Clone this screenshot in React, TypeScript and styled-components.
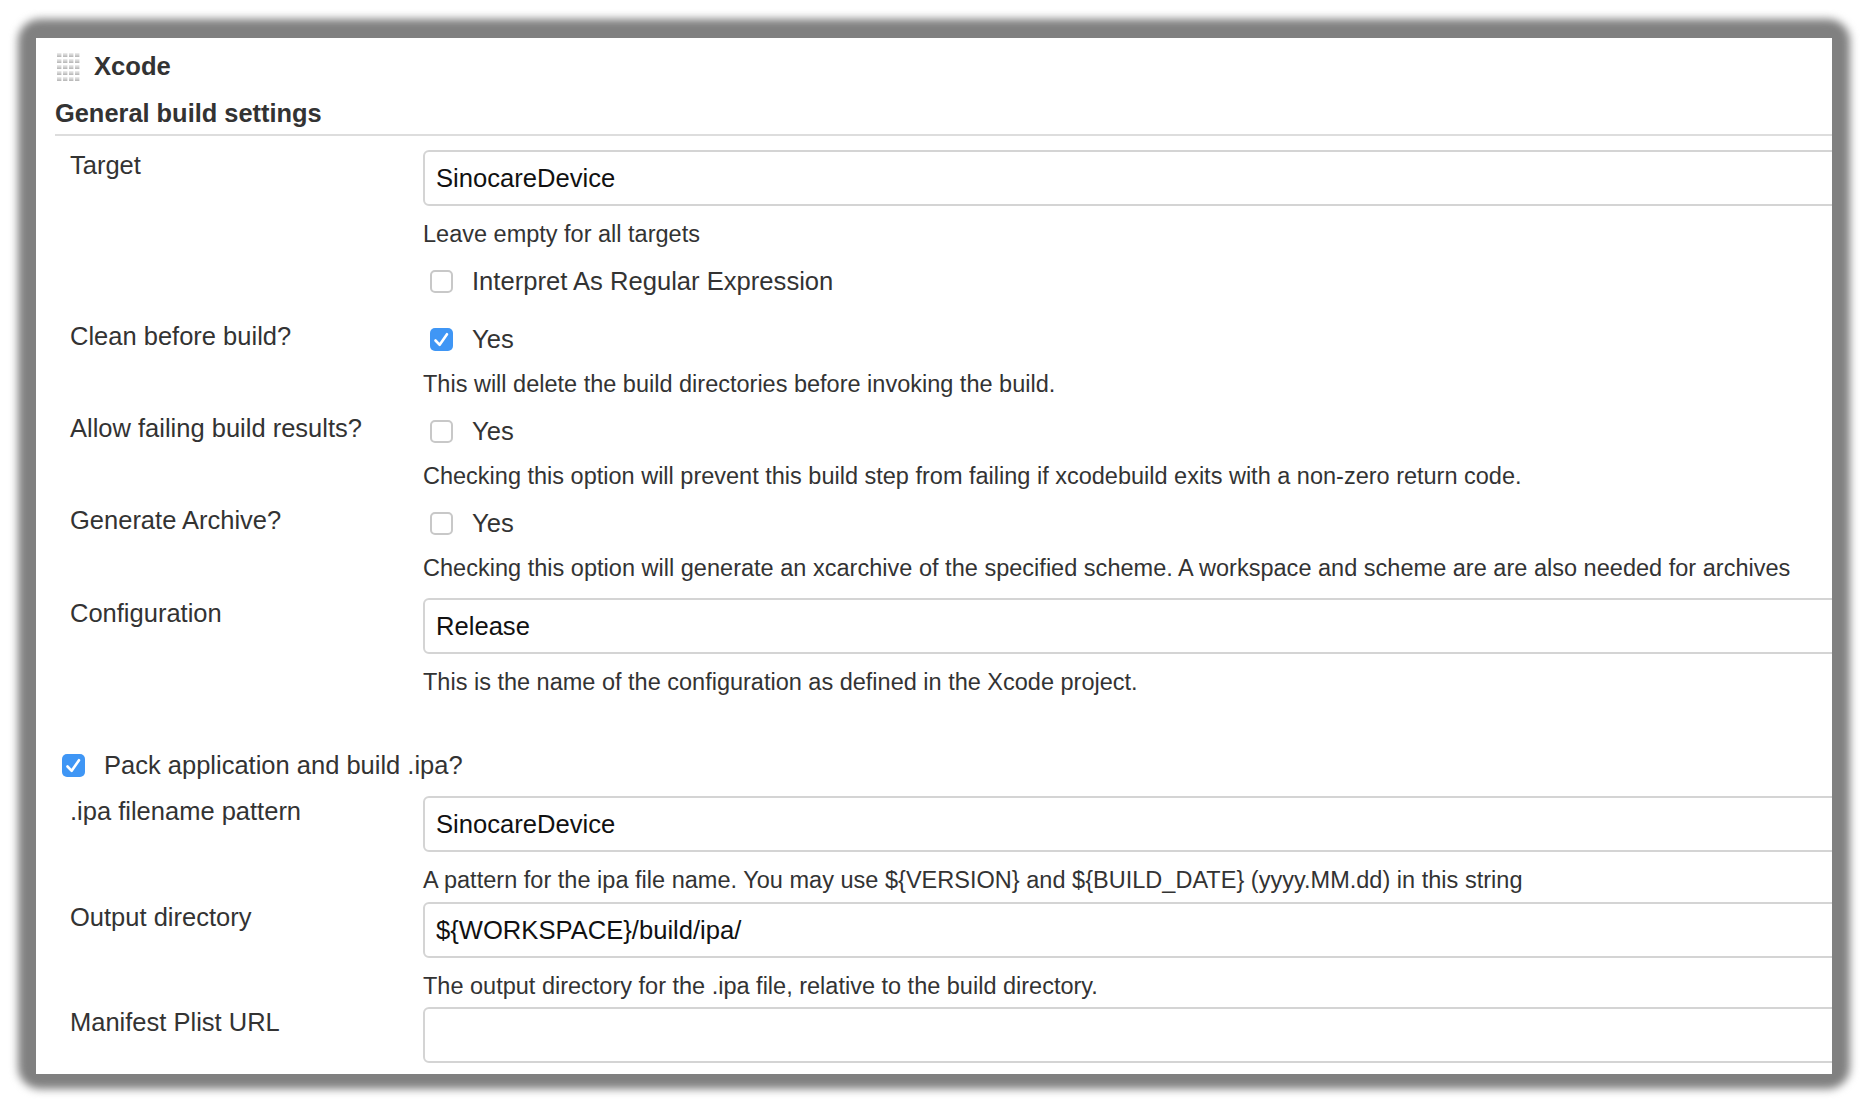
import React from "react";
import styled, { createGlobalStyle } from "styled-components";

const GlobalStyle = createGlobalStyle`
  html, body {
    margin: 0;
    padding: 0;
    background: #fff;
  }
  body {
    font-family: "Liberation Sans", Arial, sans-serif;
    color: #333;
  }
`;

// dotted grip next to the step title
const DragHandle: React.FC = () => {
  const dots = [];
  for (let row = 0; row < 5; row++) {
    for (let col = 0; col < 4; col++) {
      dots.push(<rect key={`${row}-${col}`} x={col * 6} y={row * 6} width="4.4" height="4" fill="url(#grip)" />);
    }
  }
  return (
    <HandleIcon width="23" height="28" viewBox="0 0 23 28" aria-hidden="true">
      <defs>
        <linearGradient id="grip" x1="0" y1="0" x2="0" y2="1">
          <stop offset="0" stopColor="#eeeeee" />
          <stop offset="1" stopColor="#b4b4b4" />
        </linearGradient>
      </defs>
      {dots}
    </HandleIcon>
  );
};

const Checkbox: React.FC<{ checked?: boolean }> = ({ checked }) => (
  <CheckBoxMark $checked={checked}>
    {checked && (
      <svg width="23" height="23" viewBox="0 0 23 23" aria-hidden="true">
        <path d="M5.5 12.5 L9.7 16.8 L17 6.2" fill="none" stroke="#fff" strokeWidth="2.6" strokeLinecap="round" strokeLinejoin="round" />
      </svg>
    )}
  </CheckBoxMark>
);

const App: React.FC = () => {
  return (
    <Page>
      <GlobalStyle />
      <Frame>
        <Panel>
          <StepTitle>
            <DragHandle />
            <span>Xcode</span>
          </StepTitle>
          <SectionHeading>General build settings</SectionHeading>

          <Row $after={24}>
            <FieldLabel>Target</FieldLabel>
            <Control>
              <TextInput defaultValue="SinocareDevice" />
              <Help>Leave empty for all targets</Help>
              <OptionLine>
                <Checkbox />
                <span>Interpret As Regular Expression</span>
              </OptionLine>
            </Control>
          </Row>

          <Row $after={13}>
            <FieldLabel $checkRow>Clean before build?</FieldLabel>
            <Control>
              <OptionLine>
                <Checkbox checked />
                <span>Yes</span>
              </OptionLine>
              <Help>This will delete the build directories before invoking the build.</Help>
            </Control>
          </Row>

          <Row $after={13}>
            <FieldLabel $checkRow>Allow failing build results?</FieldLabel>
            <Control>
              <OptionLine>
                <Checkbox />
                <span>Yes</span>
              </OptionLine>
              <Help>Checking this option will prevent this build step from failing if xcodebuild exits with a non-zero return code.</Help>
            </Control>
          </Row>

          <Row $after={13}>
            <FieldLabel $checkRow>Generate Archive?</FieldLabel>
            <Control>
              <OptionLine>
                <Checkbox />
                <span>Yes</span>
              </OptionLine>
              <Help $tracked>Checking this option will generate an xcarchive of the specified scheme. A workspace and scheme are are also needed for archives</Help>
            </Control>
          </Row>

          <Row $after={49}>
            <FieldLabel>Configuration</FieldLabel>
            <Control>
              <TextInput defaultValue="Release" />
              <Help>This is the name of the configuration as defined in the Xcode project.</Help>
            </Control>
          </Row>

          <PackLine>
            <Checkbox checked />
            <span>Pack application and build .ipa?</span>
          </PackLine>

          <Row $after={5}>
            <FieldLabel>.ipa filename pattern</FieldLabel>
            <Control>
              <TextInput defaultValue="SinocareDevice" />
              <Help $tracked>A pattern for the ipa file name. You may use {"${VERSION}"} and {"${BUILD_DATE}"} (yyyy.MM.dd) in this string</Help>
            </Control>
          </Row>

          <Row $after={4}>
            <FieldLabel>Output directory</FieldLabel>
            <Control>
              <TextInput defaultValue="${WORKSPACE}/build/ipa/" />
              <Help>The output directory for the .ipa file, relative to the build directory.</Help>
            </Control>
          </Row>

          <Row $after={0}>
            <FieldLabel>Manifest Plist URL</FieldLabel>
            <Control>
              <TextInput defaultValue="" />
            </Control>
          </Row>
        </Panel>
      </Frame>
    </Page>
  );
};

export default App;

// Styled components
const Page = styled.div`
  width: 1872px;
  height: 1104px;
  padding: 19px 22px 15px 18px;
  box-sizing: border-box;
  overflow: hidden;
  background: #fff;
`;

const Frame = styled.div`
  position: relative;
  height: 100%;
  padding: 19px 18px 15px;
  box-sizing: border-box;

  /* soft grey window shadow behind the panel */
  &::before {
    content: "";
    position: absolute;
    inset: 0;
    background: #808080;
    border-radius: 22px;
    filter: blur(4.5px);
  }
`;

const Panel = styled.div`
  position: relative;
  height: 100%;
  padding: 12px 0 0 19px;
  box-sizing: border-box;
  background: #fff;
  overflow: hidden;
`;

const StepTitle = styled.div`
  display: flex;
  align-items: center;
  gap: 14px;
  height: 32px;
  padding-left: 2px;
  font-size: 25.6px;
  font-weight: bold;
  line-height: 32px;
  color: #333;
`;

const HandleIcon = styled.svg`
  display: block;
  flex: none;
  margin-top: 2px;
`;

const SectionHeading = styled.div`
  height: 39px;
  margin: 11px 0 14px;
  padding-top: 2px;
  border-bottom: 2px solid #ddd;
  box-sizing: content-box;
  font-size: 25.4px;
  font-weight: bold;
  line-height: 36px;
  color: #333;
`;

const Row = styled.div<{ $after: number }>`
  display: grid;
  grid-template-columns: 368px 1fr;
  margin-bottom: ${(p) => p.$after}px;
`;

const FieldLabel = styled.div<{ $checkRow?: boolean }>`
  padding-left: 15px;
  font-size: 25.5px;
  line-height: 34px;
  margin-top: ${(p) => (p.$checkRow ? "-3px" : "-2px")};
  color: #333;
`;

const Control = styled.div`
  display: flex;
  flex-direction: column;
  min-width: 0;
`;

const TextInput = styled.input`
  display: block;
  width: calc(100% + 24px);
  height: 56px;
  padding: 0 11px;
  box-sizing: border-box;
  border: 2px solid #d4d4d4;
  border-radius: 6px;
  outline: none;
  background: #fff;
  font-family: "Liberation Sans", Arial, sans-serif;
  font-size: 25.6px;
  color: #111;
`;

const Help = styled.div<{ $tracked?: boolean }>`
  margin-top: 11px;
  font-size: 23.5px;
  letter-spacing: ${(p) => (p.$tracked ? "0.018px" : "normal")};
  line-height: 34px;
  color: #333;
  white-space: nowrap;

  & + div {
    margin-top: 13px;
  }
`;

const OptionLine = styled.div`
  display: flex;
  align-items: center;
  gap: 19px;
  height: 34px;
  padding-left: 7px;
  font-size: 25.6px;
  color: #333;
`;

const PackLine = styled(OptionLine)`
  margin-bottom: 14px;
  font-size: 25.5px;
`;

const CheckBoxMark = styled.span<{ $checked?: boolean }>`
  display: flex;
  align-items: center;
  justify-content: center;
  flex: none;
  width: 23px;
  height: 23px;
  box-sizing: border-box;
  border-radius: 5px;
  border: ${(p) => (p.$checked ? "none" : "2px solid #c8c8c8")};
  background: ${(p) => (p.$checked ? "#3f96f5" : "#fff")};
`;
